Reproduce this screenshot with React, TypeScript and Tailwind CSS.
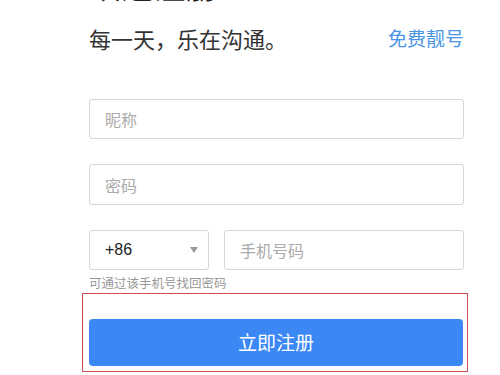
import React from "react";

export default function App() {
  return (
    <div
      className="w-[500px] h-[375px] overflow-hidden bg-white"
      style={{ fontFamily: '"Noto Sans CJK SC", "Liberation Sans", sans-serif' }}
    >
      <div className="ml-[89px] w-[375px] flex flex-col">
        <div className="-mt-[32px] h-[32px] text-[32px] leading-[32px] font-bold text-[#222]">欢迎注册</div>
        <div className="mt-[27px] h-[22px] flex items-center justify-between">
          <span className="text-[22px] leading-[22px] text-[#333]">每一天，乐在沟通。</span>
          <span className="text-[19px] leading-[22px] text-[#4a94e4]">免费靓号</span>
        </div>
        <div className="mt-[50px] h-[40px] border border-[#d6d6d6] rounded-[3px] flex items-center pl-[15px] text-[16px] text-[#aaaaaa]">
          昵称
        </div>
        <div className="mt-[25px] h-[41px] border border-[#d6d6d6] rounded-[3px] flex items-center pl-[15px] text-[16px] text-[#aaaaaa]">
          密码
        </div>
        <div className="mt-[25px] h-[40px] flex gap-[15px]">
          <div className="w-[120px] border border-[#d6d6d6] rounded-[3px] flex items-center justify-between pl-[15px] pr-[10px]">
            <span className="text-[16px] text-[#222]" style={{ fontFamily: '"Liberation Sans", sans-serif' }}>+86</span>
            <svg width="8" height="6" viewBox="0 0 8 6">
              <path d="M0 0 L8 0 L4 6 Z" fill="#999" />
            </svg>
          </div>
          <div className="flex-1 border border-[#d6d6d6] rounded-[3px] flex items-center pl-[15px] text-[16px] text-[#aaaaaa]">
            手机号码
          </div>
        </div>
        <div className="mt-[6px] h-[13px] text-[12.5px] leading-[13px] text-[#999]">可通过该手机号找回密码</div>
        <div className="mt-[4px] -ml-[7px] -mr-[4px] border border-[#cf4f4f] pt-[25px] pb-[5px] pl-[6px] pr-[4px]">
          <div className="h-[47px] rounded-[4px] bg-[#3b88f5] flex items-center justify-center text-[19px] text-white">
            立即注册
          </div>
        </div>
      </div>
    </div>
  );
}
